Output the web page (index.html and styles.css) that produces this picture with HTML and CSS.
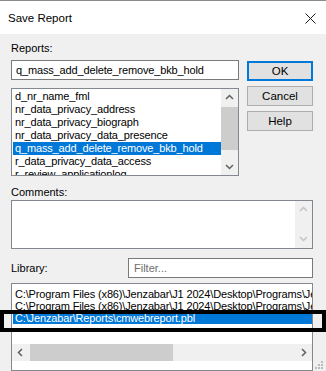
FILE: index.html
```html
<!DOCTYPE html>
<html lang="en">
    <head>
        <meta charset="UTF-8" />
        <title>Save Report</title>
        <link rel="stylesheet" href="styles.css">
    </head>
    <body>
        <div class="titlebar">
            <span>Save Report</span>
            <svg class="close" width="11" height="11" viewBox="0 0 11 11"><path d="M0.5 0.5 L10.5 10.5 M10.5 0.5 L0.5 10.5" stroke="#1a1a1a" stroke-width="1"/></svg>
        </div>
        <div class="dialog">
            <div class="top">
                <div class="leftcol">
                    <div class="label">Reports:</div>
                    <div class="input">q_mass_add_delete_remove_bkb_hold</div>
                    <div class="listbox reports">
                        <div class="rows">
                            <div class="row">d_nr_name_fml</div>
                            <div class="row">nr_data_privacy_address</div>
                            <div class="row">nr_data_privacy_biograph</div>
                            <div class="row">nr_data_privacy_data_presence</div>
                            <div class="row sel">q_mass_add_delete_remove_bkb_hold</div>
                            <div class="row">r_data_privacy_data_access</div>
                            <div class="row">r_review_applicationlog</div>
                        </div>
                        <div class="vscroll">
                            <svg width="17" height="17" viewBox="0 0 17 17"><path d="M5 10 L8.5 6.5 L12 10" fill="none" stroke="#606060" stroke-width="1.5"/></svg>
                            <div class="track"><div class="thumb"></div></div>
                            <svg width="17" height="17" viewBox="0 0 17 17"><path d="M5 7 L8.5 10.5 L12 7" fill="none" stroke="#606060" stroke-width="1.5"/></svg>
                        </div>
                    </div>
                </div>
                <div class="buttons">
                    <button class="btn ok">OK</button>
                    <button class="btn">Cancel</button>
                    <button class="btn">Help</button>
                </div>
            </div>
            <div class="label comments-label">Comments:</div>
            <div class="comments">
                <div class="vscroll off">
                    <svg width="17" height="17" viewBox="0 0 17 17"><path d="M5 10 L8.5 6.5 L12 10" fill="none" stroke="#c4c4c4" stroke-width="1.5"/></svg>
                    <svg width="17" height="17" viewBox="0 0 17 17"><path d="M5 7 L8.5 10.5 L12 7" fill="none" stroke="#c4c4c4" stroke-width="1.5"/></svg>
                </div>
            </div>
            <div class="libline">
                <div class="label">Library:</div>
                <div class="filter">Filter...</div>
            </div>
            <div class="listbox library">
                <div class="librows">
                    <div class="row">C:\Program Files (x86)\Jenzabar\J1 2024\Desktop\Programs\Jenzabar</div>
                    <div class="row">C:\Program Files (x86)\Jenzabar\J1 2024\Desktop\Programs\Jenzabar</div>
                    <div class="row sel">C:\Jenzabar\Reports\cmwebreport.pbl</div>
                </div>
                <div class="hscroll">
                    <svg width="17" height="17" viewBox="0 0 17 17"><path d="M10 5 L6.5 8.5 L10 12" fill="none" stroke="#606060" stroke-width="1.5"/></svg>
                    <div class="htrack"><div class="hthumb"></div></div>
                    <svg width="17" height="17" viewBox="0 0 17 17"><path d="M7 5 L10.5 8.5 L7 12" fill="none" stroke="#606060" stroke-width="1.5"/></svg>
                </div>
            </div>
        </div>
        <div class="marker"></div>
        <svg class="grip" width="10" height="10" viewBox="0 0 10 10">
            <rect x="7" y="1" width="2" height="2" fill="#bbb"/>
            <rect x="4" y="4" width="2" height="2" fill="#bbb"/>
            <rect x="7" y="4" width="2" height="2" fill="#bbb"/>
            <rect x="1" y="7" width="2" height="2" fill="#bbb"/>
            <rect x="4" y="7" width="2" height="2" fill="#bbb"/>
            <rect x="7" y="7" width="2" height="2" fill="#bbb"/>
        </svg>
    </body>
</html>
```

FILE: styles.css
```css
body {
    margin: 0;
    width: 326px;
    height: 371px;
    overflow: hidden;
    background: #f0f0f0;
    font: 11px "Liberation Sans", Arial, sans-serif;
    color: #000;
    position: relative;
}
.titlebar {
    height: 33px;
    border-top: 1px solid #8a8a8a;
    background: #fff;
    display: flex;
    align-items: center;
    justify-content: space-between;
    padding: 0 10px 0 8px;
    font-size: 11.5px;
}
.close { margin-top: 1px; }
.dialog {
    padding: 0 13px 0 11px;
}
.label {
    line-height: 15px;
}
.top {
    display: flex;
    gap: 8px;
}
.leftcol {
    width: 228px;
    padding-top: 7px;
}
.leftcol .label { margin-bottom: 4px; }
.input {
    height: 18px;
    border: 1px solid #7a7a7a;
    background: #fff;
    line-height: 18px;
    padding-left: 4px;
    letter-spacing: -0.15px;
}
.listbox {
    border: 1px solid #828790;
    background: #fff;
    position: relative;
    overflow: hidden;
}
.reports {
    margin-top: 8px;
    height: 86px;
    display: flex;
}
.rows {
    flex: 1;
    padding-top: 1px;
    overflow: hidden;
}
.row {
    height: 13px;
    line-height: 13px;
    padding-left: 3px;
    white-space: nowrap;
    letter-spacing: -0.15px;
}
.row.sel {
    background: #0078d7;
    color: #fff;
    margin-left: 1px;
    padding-left: 2px;
}
.vscroll {
    width: 17px;
    background: #f0f0f0;
    display: flex;
    flex-direction: column;
}
.vscroll svg { display: block; }
.track {
    flex: 1;
}
.thumb {
    margin-top: 1px;
    height: 43px;
    background: #cdcdcd;
}
.buttons {
    padding-top: 27px;
    display: flex;
    flex-direction: column;
    gap: 5px;
}
.btn {
    width: 66px;
    height: 20px;
    border: 1px solid #adadad;
    background: #e1e1e1;
    font: 11.5px "Liberation Sans", Arial, sans-serif;
    color: #000;
    padding: 0;
}
.btn.ok {
    border: 2px solid #0078d7;
}
.comments-label {
    margin-top: 9px;
}
.comments {
    height: 47px;
    border: 1px solid #828790;
    background: #fff;
    display: flex;
    justify-content: flex-end;
}
.vscroll.off {
    justify-content: space-between;
    padding-bottom: 1px;
}
.libline {
    margin-top: 9px;
    display: flex;
    align-items: center;
    justify-content: space-between;
}
.filter {
    width: 178px;
    height: 18px;
    border: 1px solid #7a7a7a;
    background: #fff;
    line-height: 18px;
    padding-left: 5px;
    color: #6d6d6d;
}
.library {
    margin-top: 5px;
    height: 86px;
}
.librows {
    padding-top: 4px;
    overflow: hidden;
}
.librows .row {
    height: 12px;
    line-height: 12px;
}
.hscroll {
    position: absolute;
    left: 0;
    right: 0;
    top: 60px;
    height: 17px;
    background: #f0f0f0;
    display: flex;
}
.hscroll svg { display: block; }
.htrack {
    flex: 1;
}
.hthumb {
    margin-left: 1px;
    width: 143px;
    height: 17px;
    background: #cdcdcd;
}
.marker {
    position: absolute;
    left: 0;
    top: 310px;
    width: 318px;
    height: 14px;
    border: 4px solid #000;
}
.grip {
    position: absolute;
    right: 2px;
    bottom: 1px;
}
```
